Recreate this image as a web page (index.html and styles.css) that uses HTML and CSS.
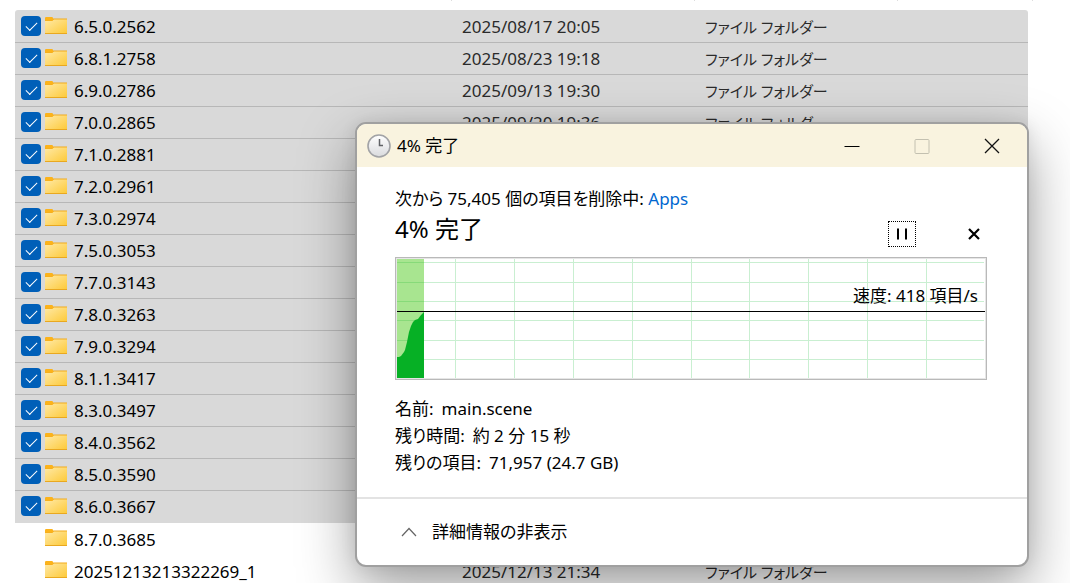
FILE: index.html
```html
<!DOCTYPE html>
<html lang="ja">
<head>
<meta charset="utf-8">
<meta name="viewport" content="width=device-width, initial-scale=1">
<title>4% 完了</title>
<link rel="stylesheet" href="styles.css">
</head>
<body>
<svg class="defs" aria-hidden="true">
  <defs>
    <linearGradient id="folder-fill" x1="0" y1="0" x2="1" y2="1">
      <stop offset="0" stop-color="#ffe9a6"/>
      <stop offset="1" stop-color="#fdc937"/>
    </linearGradient>
    <linearGradient id="clock-fill" x1="0" y1="0" x2="0" y2="1">
      <stop offset="0" stop-color="#ffffff"/>
      <stop offset="1" stop-color="#d9dadd"/>
    </linearGradient>
    <symbol id="folder" viewBox="0 0 22 18">
      <path d="M0 2Q0 0 1.5 0H7L8 1.500H22V4H0Z" fill="#f2ab1c"/>
      <path d="M0 4H7L9 2.5H22V17H0Z" fill="url(#folder-fill)"/>
      <path d="M0 16H22V17H0Z" fill="#e9a820"/>
      <path d="M0 1.5Q0 0 1.5 0H7L8 1V3.5H0Z" fill="#fcb31b"/>
    </symbol>
  </defs>
</svg>
<main class="explorer">
  <div class="column-marks"><i></i><i></i><i></i><i></i></div>
  <table class="files">
    <colgroup><col class="col-name"><col class="col-date"><col class="col-type"></colgroup>
    <tbody id="rows"></tbody>
  </table>
</main>

<section class="dialog" role="dialog" aria-labelledby="dialog-title">
  <header class="titlebar">
    <svg class="clock" viewBox="0 0 24 24" aria-hidden="true">
      <circle cx="12" cy="12" r="11" fill="url(#clock-fill)" stroke="#a2a3a6" stroke-width="1.6"/>
      <path d="M12.5 5V11.5H16" fill="none" stroke="#606266" stroke-width="1.5"/>
    </svg>
    <span id="dialog-title" class="title">4% 完了</span>
    <button class="caption" aria-label="最小化"><svg viewBox="0 0 16 16"><path d="M.5 8.5H15.5" stroke="#000"/></svg></button>
    <button class="caption" aria-label="最大化" disabled><svg viewBox="0 0 16 16"><rect x="1" y="1.500" width="14" height="14" rx="1" fill="none" stroke="#c3c0b0"/></svg></button>
    <button class="caption" aria-label="閉じる"><svg viewBox="0 0 16 16"><path d="M1 1L15 15M15 1L1 15" stroke="#111" stroke-width="1.3"/></svg></button>
  </header>
  <div class="content">
    <p class="source">次から 75,405 個の項目を削除中: <a href="#apps">Apps</a></p>
    <div class="status">
      <h1 class="percent">4% 完了</h1>
      <button class="pause" aria-label="一時停止"><svg viewBox="0 0 12 12"><path d="M2 0.500V11.500M10 0.500V11.500" stroke="#000" stroke-width="2"/></svg></button>
      <button class="cancel" aria-label="キャンセル"><svg viewBox="0 0 12 12"><path d="M1 1L11 11M11 1L1 11" stroke="#000" stroke-width="2.2"/></svg></button>
    </div>
    <div class="chart">
      <svg class="plot" viewBox="0 0 588 119" preserveAspectRatio="none" role="img" aria-label="速度グラフ">
        <path d="M0 3.500H587M0 23.500H587M0 42.500H587M0 61.500H587M0 81.500H587M0 100.500H587M58.500 0V119M117.500 0V119M176.500 0V119M235.500 0V119M294.500 0V119M352.500 0V119M411.500 0V119M470.500 0V119M529.500 0V119" stroke="#c9efd1"/>
        <path d="M0 0H27V119H0Z" fill="#a8e590"/>
        <path d="M0 3.500H27M0 23.500H27M0 42.500H27M0 61.500H27M0 81.500H27" stroke="#87da79"/>
        <path d="M0 98H2L4 97L7 93L8 91L10 83L12 73L14 67L16 63L18 61L21 60L24 56L27 53V119H0Z" fill="#06b025"/>
        <path d="M0 52.500H588" stroke="#000"/>
      </svg>
      <span class="speed">速度: 418 項目/s</span>
    </div>
    <dl class="details">
      <div><dt>名前:</dt><dd>main.scene</dd></div>
      <div><dt>残り時間:</dt><dd>約 2 分 15 秒</dd></div>
      <div><dt>残りの項目:</dt><dd>71,957 (24.7 GB)</dd></div>
    </dl>
  </div>
  <footer class="footer">
    <button class="toggle"><svg viewBox="0 0 16 10" aria-hidden="true"><path d="M1 9L8 1.500L15 9" fill="none" stroke="#666" stroke-width="1.2"/></svg>詳細情報の非表示</button>
  </footer>
</section>
<script src="rows.js"></script>
</body>
</html>
```
FILE: styles.css
```css
* {
  box-sizing: border-box;
}

body {
  margin: 0;
  height: 100vh;
  overflow: hidden;
  position: relative;
  background: #fff;
  color: #000;
  font: 17px/24px "Noto Sans", "Noto Sans CJK JP", sans-serif;
}

button {
  margin: 0;
  padding: 0;
  border: 0;
  background: none;
  color: inherit;
  font: inherit;
}

.defs {
  position: absolute;
  width: 0;
  height: 0;
}

.explorer {
  padding: 0 42px 0 15px;
}

.column-marks {
  display: grid;
  grid-template-columns: 437px 243px 203px 135px;
  height: 10px;
}

.column-marks i {
  height: 1px;
  border-right: 1px solid #ddd;
}

.files {
  width: 100%;
  table-layout: fixed;
  border-collapse: separate;
  border-spacing: 0;
}

.col-name {
  width: 447px;
}

.col-date {
  width: 243px;
}

.files td {
  height: 32px;
  padding: 1px 0 0;
  white-space: nowrap;
  color: #2b2b2b;
}

.files td:last-child {
  font-size: 15px;
  font-feature-settings: "palt";
}

.files .selected td {
  background: #d9d9d9;
  border-bottom: 1px solid #b7b7b7;
}

.files .selected.last td {
  border-bottom-color: #d9d9d9;
}

.files tr:first-child td {
  height: 33px;
  padding-top: 2px;
}

.files tr:first-child td:first-child {
  border-top-left-radius: 3px;
}

.files tr:first-child td:last-child {
  border-top-right-radius: 3px;
}

.name {
  display: flex;
  align-items: center;
  padding-left: 6px;
  color: #000;
}

.name input {
  appearance: none;
  flex: none;
  width: 20px;
  height: 20px;
  margin: 0 4px 3px 0;
  border-radius: 4px;
}

.name input:checked {
  background: #005fb8;
}

.name input:checked::after {
  content: "";
  display: block;
  width: 10px;
  height: 5px;
  margin: 6px 5px;
  border: solid #fff;
  border-width: 0 0 1px 1px;
  transform: rotate(-45deg);
}

.folder {
  flex: none;
  width: 22px;
  height: 18px;
  margin: 0 7px 3px 0;
}

.dialog {
  position: absolute;
  top: 122px;
  left: 355px;
  right: 41px;
  overflow: hidden;
  border: 2px solid #a0a0a0;
  border-radius: 11px;
  background: #fff;
  background-clip: padding-box;
  box-shadow: 0 22px 56px rgba(0, 0, 0, 0.38), 0 0 16px rgba(0, 0, 0, 0.08);
  font-feature-settings: "palt";
}

.titlebar {
  display: flex;
  align-items: center;
  height: 43px;
  padding-left: 10px;
  background: #f9f3df;
}

.clock {
  width: 24px;
  height: 24px;
  margin-right: 6px;
}

.title {
  flex: 1;
}

.caption {
  display: grid;
  place-items: center;
  width: 70px;
  height: 42px;
}

.caption svg {
  width: 16px;
  height: 16px;
}

.content {
  padding: 20px 39px 21px 38px;
}

.source {
  margin: 0;
}

.source a {
  color: #0067d0;
  text-decoration: none;
}

.status {
  display: flex;
  align-items: flex-end;
  height: 36px;
  margin-bottom: 10px;
}

.percent {
  flex: 1;
  align-self: center;
  margin: 0;
  font-size: 24px;
  font-weight: 400;
  line-height: 32px;
}

.pause,
.cancel {
  display: grid;
  place-items: center;
  width: 28px;
  height: 26px;
}

.pause {
  margin-right: 44px;
  border: 1px dotted #000;
}

.pause svg,
.cancel svg {
  width: 12px;
  height: 12px;
}

.chart {
  position: relative;
  margin-right: 1px;
  border: 1px solid #b9b9b9;
  padding: 1px;
  background: #e6e6e6;
}

.plot {
  display: block;
  width: 100%;
  height: 119px;
  background: #fff;
}

.speed {
  position: absolute;
  top: 26px;
  right: 8px;
}

.details {
  margin: 15px 0 0;
  line-height: 27px;
}

.details div {
  display: flex;
  gap: 8px;
}

.details dd {
  margin: 0;
}

.footer {
  display: flex;
  align-items: center;
  height: 68px;
  padding-left: 44px;
  border-top: 2px solid #e3e3e3;
}

.toggle {
  display: flex;
  align-items: center;
  gap: 15px;
}

.toggle svg {
  width: 16px;
  height: 10px;
}
```
FILE: rows.js
```js
const type = "ファイル フォルダー";
const files = [
  ["6.5.0.2562", "2025/08/17 20:05", type],
  ["6.8.1.2758", "2025/08/23 19:18", type],
  ["6.9.0.2786", "2025/09/13 19:30", type],
  ["7.0.0.2865", "2025/09/20 19:36", type],
  ["7.1.0.2881"], ["7.2.0.2961"], ["7.3.0.2974"], ["7.5.0.3053"],
  ["7.7.0.3143"], ["7.8.0.3263"], ["7.9.0.3294"], ["8.1.1.3417"],
  ["8.3.0.3497"], ["8.4.0.3562"], ["8.5.0.3590"], ["8.6.0.3667"],
  ["8.7.0.3685"],
  ["20251213213322269_1", "2025/12/13 21:34", type]
];
const selectedCount = 16;

document.getElementById("rows").innerHTML = files.map(([name, date = "", kind = ""], i) => {
  const selected = i < selectedCount;
  const rowClass = selected ? (i === selectedCount - 1 ? "selected last" : "selected") : "";
  return `<tr class="${rowClass}">
    <td><label class="name"><input type="checkbox"${selected ? " checked" : ""}><svg class="folder" aria-hidden="true"><use href="#folder"/></svg><span>${name}</span></label></td>
    <td>${date}</td>
    <td>${kind}</td>
  </tr>`;
}).join("");
```
